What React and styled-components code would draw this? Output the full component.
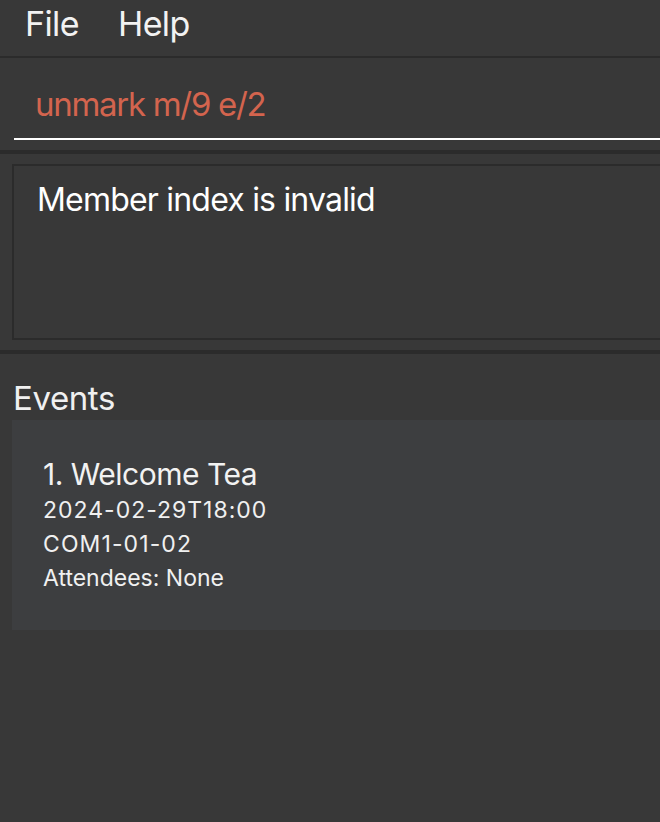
import React from "react";
import styled, { createGlobalStyle } from "styled-components";

const Global = createGlobalStyle`
  html, body { margin: 0; padding: 0; background: #383838; }
  body { font-family: Inter, "Noto Sans", sans-serif; color: #ffffff; }
  #root { width: 660px; height: 822px; overflow: hidden; }
`;

const Window = styled.div`
  width: 660px;
  height: 822px;
  background: #383838;
  display: flex;
  flex-direction: column;
`;

const MenuBar = styled.div`
  height: 56px;
  display: flex;
  align-items: center;
  gap: 39px;
  padding-left: 25px;
  box-sizing: border-box;
`;

const MenuItem = styled.span`
  font-size: 34px;
  letter-spacing: -0.6px;
  color: #f2f2f2;
  line-height: 1;
  margin-top: -8px;
`;

const Divider = styled.div`
  height: ${(p) => p.$h}px;
  background: #2b2b2b;
  flex: none;
`;

const CommandArea = styled.div`
  height: 92px;
  padding-left: 14px;
  box-sizing: border-box;
  display: flex;
  flex-direction: column;
  justify-content: flex-end;
  padding-bottom: 10px;
`;

const CommandInput = styled.div`
  border-bottom: 2px solid #ffffff;
  padding: 0 0 14px 21px;
  font-size: 33px;
  letter-spacing: -1.3px;
  line-height: 40px;
  color: #d3644e;
`;

const ResultArea = styled.div`
  height: 196px;
  padding: 10px 0 10px 12px;
  box-sizing: border-box;
  display: flex;
`;

const ResultBox = styled.div`
  flex: 1;
  border: 2px solid #2b2b2b;
  border-right: none;
  padding: 14px 0 0 23px;
  font-size: 32px;
  letter-spacing: -0.8px;
  line-height: 40px;
  color: #ffffff;
`;

const EventsPanel = styled.div`
  flex: 1;
  display: flex;
  flex-direction: column;
  padding-left: 12px;
`;

const PanelTitle = styled.div`
  font-size: 33px;
  letter-spacing: -0.4px;
  line-height: 40px;
  color: #f0f0f0;
  padding: 24px 0 2px 1px;
`;

const EventCard = styled.div`
  height: 210px;
  background: #3d3e40;
  padding: 36px 0 0 31px;
  box-sizing: border-box;
  display: flex;
  flex-direction: column;
`;

const CardTitle = styled.div`
  font-size: 30px;
  letter-spacing: -0.5px;
  line-height: 36px;
  color: #f2f2f2;
  margin-bottom: 1px;
`;

const CardLine = styled.div`
  font-size: 23px;
  letter-spacing: ${(p) => p.$spacing || 0}px;
  line-height: 34px;
  color: #f0f0f0;
`;

export default function App() {
  return (
    <>
      <Global />
      <Window>
        <MenuBar>
          <MenuItem>File</MenuItem>
          <MenuItem>Help</MenuItem>
        </MenuBar>
        <Divider $h={2} />
        <CommandArea>
          <CommandInput>unmark m/9 e/2</CommandInput>
        </CommandArea>
        <Divider $h={4} />
        <ResultArea>
          <ResultBox>Member index is invalid</ResultBox>
        </ResultArea>
        <Divider $h={4} />
        <EventsPanel>
          <PanelTitle>Events</PanelTitle>
          <EventCard>
            <CardTitle>1. Welcome Tea</CardTitle>
            <CardLine $spacing={1}>2024-02-29T18:00</CardLine>
            <CardLine $spacing={1.1}>COM1-01-02</CardLine>
            <CardLine>Attendees: None</CardLine>
          </EventCard>
        </EventsPanel>
      </Window>
    </>
  );
}
